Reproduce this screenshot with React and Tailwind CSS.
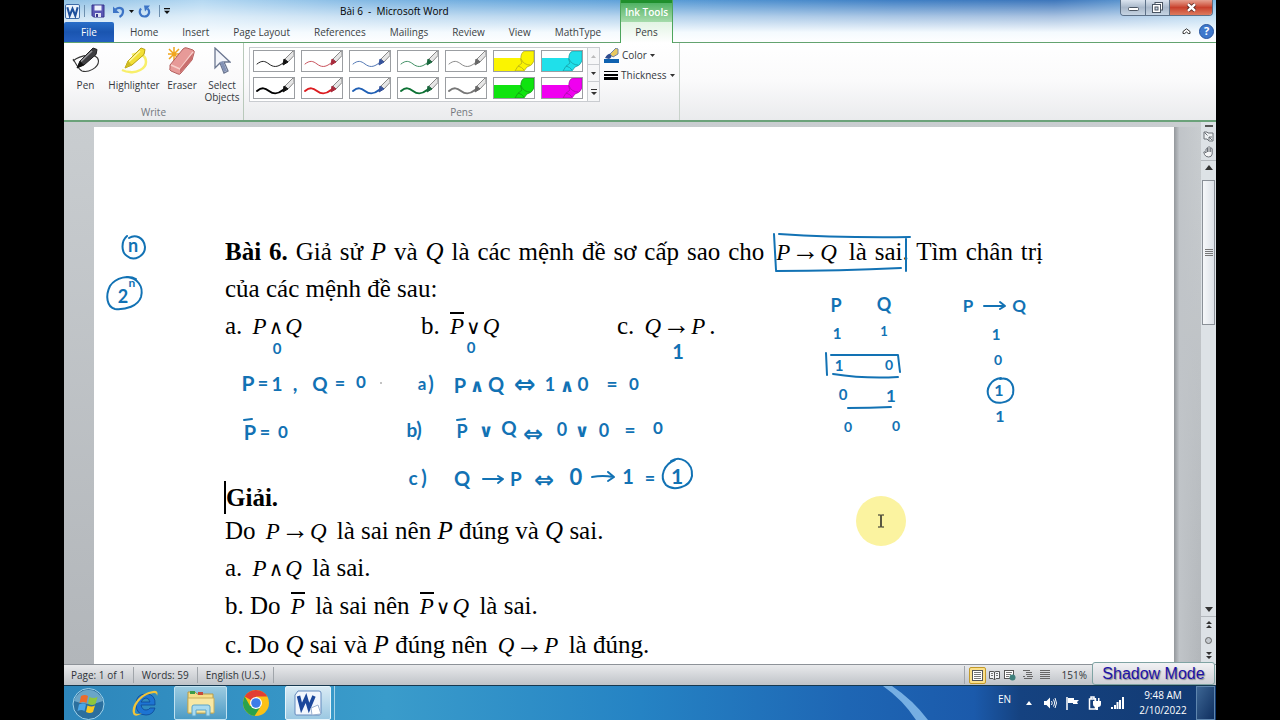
import React from "react";

const INK = "#1272b4";

function WordLogo({ size = 15 }) {
  return (
    <svg width={size} height={size} viewBox="0 0 16 16" aria-hidden="true">
      <rect x="0.5" y="0.5" width="15" height="15" rx="1.5" fill="#e9f1fb" stroke="#2f5f9f" />
      <path d="M2.5 3.5 L5 12.5 L8 5 L11 12.5 L13.5 3.5" fill="none" stroke="#1d4f9c" strokeWidth="2.2" />
    </svg>
  );
}

function QuickAccess() {
  return (
    <div className="flex items-center">
      <WordLogo size={15} />
      <span className="mx-1 h-3 w-px bg-[#6d8fae]" />
      <button aria-label="Save" className="ml-[2px]">
        <svg width="14" height="14" viewBox="0 0 14 14">
          <path d="M1 1h12v12H2.500L1 11.500z" fill="#5b57b5" stroke="#37358b" />
          <rect x="3.500" y="1.500" width="7" height="5" fill="#eef2fb" />
          <rect x="4" y="9" width="6" height="4" fill="#dfe3f2" />
          <rect x="5" y="10" width="2" height="3" fill="#37358b" />
        </svg>
      </button>
      <button aria-label="Undo" className="ml-2 flex items-center">
        <svg width="12" height="13" viewBox="0 0 12 13">
          <path d="M2.500 4.500 C6 1.500 10.500 3 10 7 C9.800 9.500 8.500 11 6.500 12" fill="none" stroke="#3d74c6" strokeWidth="2.200" />
          <path d="M0 1.500 V8 H6.500z" fill="#3d74c6" />
        </svg>
      </button>
      <svg className="ml-1" width="5" height="3" viewBox="0 0 5 3"><path d="M0 0h5L2.500 3z" fill="#111" /></svg>
      <button aria-label="Repeat" className="ml-1">
        <svg width="13" height="13" viewBox="0 0 13 13">
          <path d="M3 3.500 C0.500 6.500 2 11.500 6.500 11.500 C11 11.500 12.500 6.500 9.500 3.500" fill="none" stroke="#3d74c6" strokeWidth="2.200" />
          <path d="M6 0.500 H12 L7 6.500z" fill="#3d74c6" />
        </svg>
      </button>
      <span className="ml-2 h-3 w-px bg-[#6d8fae]" />
      <button aria-label="Customize Quick Access Toolbar" className="ml-1">
        <svg width="6" height="6" viewBox="0 0 6 6"><path d="M0 0h6v1.200H0zM0 2.800h6L3 6z" fill="#111" /></svg>
      </button>
    </div>
  );
}

const tabs = ["Home", "Insert", "Page Layout", "References", "Mailings", "Review", "View", "MathType"];

function Header() {
  return (
    <header className="flex h-[43px] shrink-0 bg-[linear-gradient(180deg,transparent_0%,rgba(255,255,255,0.55)_38%,#f4fafe_75%,#ffffff_100%),linear-gradient(90deg,#8fc0e4_0%,#b4d8f2_12%,#7db5e2_28%,#5c9fd8_50%,#3f7fc4_72%,#3d76bb_86%,#7fbbe8_100%)]">
      <div className="flex w-[556px] flex-col">
        <div className="flex h-[22px] items-center pl-[1px]">
          <QuickAccess />
          <h1 className="ml-[170px] text-[10px] leading-5 whitespace-pre text-black">Bài 6  -  Microsoft Word</h1>
        </div>
        <nav className="flex h-[21px] items-stretch border-b border-[#63a36f] text-[10px] text-[#3b3f44]">
          <button className="w-[50px] rounded-t-[2px] bg-linear-to-b from-[#2a6fc9] via-[#1a55b0] to-[#2560c0] text-white">File</button>
          <div className="flex gap-6 pl-4">
            {tabs.map((t) => (
              <button key={t}>{t}</button>
            ))}
          </div>
        </nav>
      </div>
      <div className="flex w-[53px] flex-col border-x border-[#4da55c] text-[10px]">
        <div className="flex h-[22px] items-center justify-center border-t-[3px] border-[#1f8f2c] bg-linear-to-b from-[#4fb263] to-[#a5dbab] font-semibold whitespace-nowrap text-white">Ink Tools</div>
        <button className="grow bg-linear-to-b from-[#e2f4e4] to-white text-[#3b3f44]">Pens</button>
      </div>
      <div className="flex grow flex-col items-end border-b border-[#63a36f]">
        <div className="mr-[3px] flex h-4 overflow-hidden rounded-b-[4px] border border-t-0 border-[#5d7188]">
          <button aria-label="Minimize" className="flex w-[25px] items-end justify-center border-r border-[#5d7188] bg-linear-to-b from-[#dbe4ef] via-[#a9b8ca] to-[#c6d4e3] pb-1">
            <svg width="11" height="4" viewBox="0 0 11 4"><rect x="0.500" y="0.500" width="10" height="3" rx="1" fill="#fff" stroke="#4a5563" /></svg>
          </button>
          <button aria-label="Restore" className="flex w-6 items-center justify-center border-r border-[#5d7188] bg-linear-to-b from-[#dbe4ef] via-[#a9b8ca] to-[#c6d4e3]">
            <svg width="11" height="11" viewBox="0 0 11 11"><rect x="3" y="0.500" width="7.500" height="7.500" fill="#fff" stroke="#4a5563" /><rect x="0.500" y="2.500" width="8" height="8" fill="#fff" stroke="#4a5563" /><rect x="3" y="5" width="3" height="3" fill="#cdd7e2" stroke="#4a5563" /></svg>
          </button>
          <button aria-label="Close" className="flex w-[42px] items-center justify-center bg-linear-to-b from-[#e5a191] via-[#c8402c] to-[#dd7a5e]">
            <svg width="11" height="9" viewBox="0 0 11 9"><path d="M2 1.200l7 6.600M9 1.200L2 7.800" stroke="#5b2a24" strokeWidth="4" /><path d="M2 1.200l7 6.600M9 1.200L2 7.800" stroke="#fff" strokeWidth="2.400" /></svg>
          </button>
        </div>
        <div className="mr-[2px] mt-2 flex items-center gap-2">
          <button aria-label="Minimize the Ribbon">
            <svg width="9" height="7" viewBox="0 0 9 7"><path d="M1 5.500V3.500L4.500 0.800 8 3.500v2H6.300L4.500 4 2.700 5.500z" fill="#fff" stroke="#333" /></svg>
          </button>
          <button aria-label="Help" className="flex size-[15px] items-center justify-center rounded-full border border-[#28559f] bg-[#3e78cc] text-[11px] font-bold text-white">?</button>
        </div>
      </div>
    </header>
  );
}

function PenIcon({ kind }) {
  if (kind === "eraser")
    return (
      <svg width="28" height="28" viewBox="0 0 28 28">
        <path d="M6 0v14M-1 7h14M1 2l10 10M11 2L1 12" stroke="#f0a51d" strokeWidth="1.500" />
        <path d="M2 18L15 2q2-2 4-1l6 2q2 1 1 3l-2 7-11 13q-1 2-3 1l-7-3q-2-1-1-3z" fill="#e79a98" stroke="#b4605f" />
        <path d="M3 18l9 4L25 5" fill="none" stroke="#f8cfcb" strokeWidth="1.500" />
        <path d="M12 22l13-16-1 7-12 13z" fill="#c96f6e" />
      </svg>
    );
  if (kind === "select")
    return (
      <svg width="18" height="28" viewBox="0 0 18 28">
        <path d="M2 1v20l5-5 4 10 4-2-4-9h6z" fill="#f3f5fa" stroke="#6b7690" strokeWidth="1.300" />
        <path d="M7 15l4 10 3-1-4-10z" fill="#8392b5" />
      </svg>
    );
  const pen = kind === "pen";
  const body = pen ? "#3f3f42" : "#f2df35";
  const edge = pen ? "#1d1d1f" : "#b7a012";
  return (
    <svg width="28" height="28" viewBox="0 0 28 28">
      <path
        d={pen ? "M1 14C8 8 26 5 26.500 14C26.500 21 16 26 10 24C6 22 5 18 1 12" : "M12 8C19 5 26 8 26 15C26 22 16 26 10 25C6 25 4 24 2 23"}
        fill="none"
        stroke={pen ? "#333" : "#f8ef6a"}
        strokeWidth={pen ? "1.100" : "2.500"}
      />
      <path d="M21 1l4 1.500-1 5L12 18l-7 3 3-7z" fill={body} stroke={edge} />
      <path d="M20 4L9 14.500" stroke={pen ? "#9a9a9e" : "#fff7a0"} strokeWidth="1.500" />
      <path d="M8 14l4 4-7 3z" fill={pen ? "#111" : "#d0bc22"} />
    </svg>
  );
}

const tools = [
  { kind: "pen", label: "Pen", w: "w-[43px]" },
  { kind: "highlighter", label: "Highlighter", w: "w-[52px]" },
  { kind: "eraser", label: "Eraser", w: "w-[42px]" },
  { kind: "select", label: "Select Objects", w: "w-[36px]" },
];

function PenSwatch({ color, width, tip }) {
  return (
    <svg width="40" height="20" viewBox="0 0 40 20" className="block">
      <path d="M3 13C8 9 11 10 15 13s8 4 14-1" fill="none" stroke={color} strokeWidth={width} strokeLinecap="round" />
      <path d="M31 8L39 0H40V4.500L34 11z" fill="#e6e6e6" stroke="#888" strokeWidth="1" />
      <path d="M29 14l1-6 4 3z" fill={tip} stroke={tip} strokeWidth="1" />
    </svg>
  );
}

function MarkerSwatch({ color, edge }) {
  return (
    <svg width="40" height="20" viewBox="0 0 40 20" className="block">
      <rect y="7" width="28" height="13" fill={color} />
      <path d="M27 5Q28 0 32 0H40V10Q38 15 33 16L30 20H21Q23 15 28 12Q26 9 27 5z" fill={color} stroke={edge} strokeWidth="1" strokeOpacity="0.700" />
      <path d="M27 8q3 6 9 6M24 15q4 1 6 4" fill="none" stroke={edge} strokeOpacity="0.700" />
      <path d="M33 20l2-3h5v3z" fill="#fff" />
    </svg>
  );
}

const swatches = [
  { name: "Thin black pen", color: "#222", tip: "#111", width: 1 },
  { name: "Thin red pen", color: "#c9525c", tip: "#a82a3c", width: 1 },
  { name: "Thin blue pen", color: "#5378b5", tip: "#35529a", width: 1 },
  { name: "Thin green pen", color: "#3f8f63", tip: "#17663b", width: 1 },
  { name: "Thin gray pen", color: "#8a8a8a", tip: "#666", width: 1 },
  { name: "Yellow highlighter", marker: true, color: "#fbf400", edge: "#a9a41c" },
  { name: "Cyan highlighter", marker: true, color: "#1fe0ea", edge: "#17959c" },
  { name: "Black pen", color: "#000", tip: "#111", width: 2 },
  { name: "Red pen", color: "#dc1c20", tip: "#a82a3c", width: 2 },
  { name: "Blue pen", color: "#1f5fb4", tip: "#35529a", width: 2 },
  { name: "Green pen", color: "#0d7234", tip: "#17663b", width: 2 },
  { name: "Gray pen", color: "#777", tip: "#666", width: 2 },
  { name: "Green highlighter", marker: true, color: "#10e410", edge: "#149214" },
  { name: "Magenta highlighter", marker: true, color: "#f000f0", edge: "#a010a0" },
];

function Ribbon() {
  return (
    <section className="flex h-[79px] shrink-0 border-b-2 border-[#6ba27a] bg-linear-to-b from-white via-[#fafafb] to-[#eaebed] text-[10px] text-[#33373c]">
      <div className="flex w-[180px] flex-col border-r border-[#b9c9bb]">
        <div className="flex h-[62px] gap-[1px] pt-1">
          {tools.map((t) => (
            <button key={t.kind} className={`flex flex-col items-center ${t.w}`}>
              <span className="flex h-[32px] items-start"><PenIcon kind={t.kind} /></span>
              <span className="text-center leading-[12px]">{t.label}</span>
            </button>
          ))}
        </div>
        <div className="text-center leading-4 text-[#72777d]">Write</div>
      </div>
      <div className="flex w-[436px] flex-col border-r border-[#c9d3cb]">
        <div className="flex h-[62px] pt-1 pl-[5px]">
          <div className="flex h-[55px] border border-[#c9ccd0] bg-white">
            <div className="grid grid-cols-7 gap-x-[6px] gap-y-[5px] py-[2px] pr-1 pl-[3px]">
              {swatches.map((s) => (
                <button key={s.name} aria-label={s.name} className="h-[22px] w-[42px] overflow-hidden border border-[#9b9ea2] bg-white">
                  {s.marker ? <MarkerSwatch {...s} /> : <PenSwatch {...s} />}
                </button>
              ))}
            </div>
            <div className="flex w-3 flex-col divide-y divide-[#c9ccd0] border-l border-[#c9ccd0] bg-[#f6f7f8]">
              <button aria-label="Scroll up" className="flex grow items-center justify-center"><svg width="5" height="3" viewBox="0 0 5 3"><path d="M0 3h5L2.500 0z" fill="#bbb" /></svg></button>
              <button aria-label="Scroll down" className="flex grow items-center justify-center"><svg width="5" height="3" viewBox="0 0 5 3"><path d="M0 0h5L2.500 3z" fill="#333" /></svg></button>
              <button aria-label="More pens" className="flex grow items-center justify-center"><svg width="6" height="6" viewBox="0 0 6 6"><path d="M0 0h6v1H0zM0 3h6L3 6z" fill="#333" /></svg></button>
            </div>
          </div>
          <div className="flex flex-col items-start gap-1 pl-1">
            <button className="flex h-4 items-center gap-[3px]">
              <svg width="15" height="15" viewBox="0 0 15 15"><path d="M1 10q3-5 6-4 2 3-2 5z" fill="#2f4d8f" /><path d="M6 6l6-6 2 1 0 5-5 3z" fill="#e8c860" stroke="#7182a8" /><rect y="11" width="15" height="4" fill="#0f62b0" /></svg>
              Color
              <svg width="5" height="3" viewBox="0 0 5 3"><path d="M0 0h5L2.500 3z" fill="#333" /></svg>
            </button>
            <button className="flex h-4 items-center gap-[3px]">
              <svg width="14" height="9" viewBox="0 0 14 9"><path d="M0 0h14v1H0zM0 3h14v2H0zM0 6h14v3H0z" fill="#000" /></svg>
              Thickness
              <svg width="5" height="3" viewBox="0 0 5 3"><path d="M0 0h5L2.500 3z" fill="#333" /></svg>
            </button>
          </div>
        </div>
        <div className="text-center leading-4 text-[#72777d]">Pens</div>
      </div>
    </section>
  );
}

function V({ bar, children }) {
  return <i className={bar ? "border-t-2 border-black leading-none" : ""}>{children}</i>;
}

const ops = { and: "∧", or: "∨", to: "→" };

function M({ a, op, b, bar }) {
  return (
    <span className="mx-1 inline-block text-[23px] leading-none whitespace-nowrap">
      <V bar={bar}>{a}</V>
      {op && (
        <span className={op === "to" ? "px-[1px] font-['Liberation_Serif',serif] text-[28px] leading-none" : "mx-[2px] font-['DejaVu_Sans',sans-serif] text-[20px] leading-none"}>
          {ops[op]}
        </span>
      )}
      {b && <V>{b}</V>}
    </span>
  );
}

/* [text, centre x, baseline y, size] */
const inkText = [
  ["n", 133, 252, 18], ["2", 123, 303, 18], ["n", 132, 287, 12],
  ["0", 277, 354, 15], ["0", 471, 353, 15], ["1", 678, 359, 20],
  ["P", 248, 391, 21], ["=", 263, 390, 18], ["1", 277, 391, 19], [",", 295, 391, 20], ["Q", 320, 391, 19], ["=", 340, 390, 18], ["0", 361, 388, 17],
  ["P", 250, 440, 20], ["=", 265, 439, 18], ["0", 283, 438, 17],
  ["a", 422, 390, 17], [")", 431, 391, 20],
  ["P", 460, 393, 20], ["∧", 477, 392, 18], ["Q", 496, 392, 20], ["⇔", 525, 393, 26], ["1", 550, 391, 18], ["∧", 567, 392, 18], ["0", 583, 391, 19], ["=", 612, 391, 19], ["0", 634, 390, 17],
  ["b", 412, 437, 19], [")", 419, 437, 20],
  ["P", 462, 438, 18], ["∨", 486, 437, 18], ["Q", 509, 435, 19], ["⇔", 533, 442, 24], ["0", 562, 436, 18], ["∨", 582, 437, 18], ["0", 604, 437, 18], ["=", 630, 437, 19], ["0", 658, 434, 17],
  ["c", 413, 485, 19], [")", 424, 485, 20],
  ["Q", 462, 486, 20], ["P", 516, 486, 19], ["⇔", 544, 488, 24], ["0", 576, 485, 22], ["1", 628, 484, 20], ["=", 650, 485, 18], ["1", 677, 484, 21],
  ["P", 836, 312, 18], ["Q", 884, 311, 18], ["P", 968, 312, 17], ["Q", 1019, 312, 17],
  ["1", 837, 339, 15], ["1", 884, 336, 13], ["1", 996, 340, 15],
  ["1", 839, 371, 15], ["0", 889, 370, 14], ["0", 998, 365, 14],
  ["0", 843, 400, 15], ["1", 891, 402, 17], ["1", 999, 396, 16],
  ["0", 848, 432, 14], ["0", 896, 431, 14], ["1", 1000, 422, 16],
];

function Ink() {
  return (
    <svg className="pointer-events-none absolute top-0 left-0" width="1080" height="537" viewBox="94 127 1080 537">
      <circle cx="881" cy="521" r="25" fill="#fbf3a0" />
      <path d="M878 515h2.500q.5 0 .5 1v10q0 1-.5 1H878M884 515h-2.500q-.5 0-.5 1v10q0 1 .5 1H884" fill="none" stroke="#222" />
      <g fill={INK} textAnchor="middle" fontFamily="Lato, 'DejaVu Sans', sans-serif" fontWeight="700">
        {inkText.map(([t, x, y, s], i) => (
          <text key={i} x={x} y={y} fontSize={s}>{t}</text>
        ))}
      </g>
      <g fill="none" stroke={INK} strokeWidth="2" strokeLinecap="round" strokeLinejoin="round">
        <path d="M127 236C121 241 121 252 127 256C134 262 145 256 145 247C144 237 135 234 129 238" />
        <path d="M136 279C129 275 116 277 110 286C105 296 107 307 115 309C126 310 138 306 141 297C144 286 137 278 127 277" />
        <path d="M244 420L252 419M457 420L465 419" />
        <path d="M774 234L776 270M779 234Q840 238 910 237M906 238V271M776 271Q840 271 901 268" />
        <path d="M826 353L827 375M831 355H898Q899 364 900 372M833 374Q865 379 898 377" />
        <path d="M848 408Q870 408 891 407" />
        <path d="M1001 378C991 379 985 389 989 397C994 406 1010 404 1013 394C1015 383 1008 377 1000 379" />
        <path d="M675 460C664 464 659 477 666 485C673 491 690 488 692 476C693 462 680 455 671 461" />
        <path d="M483 479Q492 479 502 479M498 476L503 479L498 483" />
        <path d="M592 477Q603 475 613 477M608 472L614 477L608 481" />
        <path d="M984 306H1004M1000 302L1005 306L1000 309" />
      </g>
      <circle cx="381" cy="383" r="0.800" fill="#777" />
    </svg>
  );
}

function DocumentPage() {
  return (
    <main className="relative mt-[5px] ml-[30px] flex-1 overflow-hidden bg-white pt-[106px] pr-[131px] pl-[131px] font-['Liberation_Serif',serif] text-[25px] leading-[37px] text-black">
      <p className="[text-align-last:justify]">
        <b>Bài 6.</b> Giả sử <i>P</i> và <i>Q</i> là các mệnh đề sơ cấp sao cho{" "}
        <M a="P" op="to" b="Q" /> là sai. Tìm chân trị
      </p>
      <p>của các mệnh đề sau:</p>
      <div className="grid grid-cols-[196px_196px_1fr]">
        <p>a. <M a="P" op="and" b="Q" /></p>
        <p>b. <M a="P" op="or" b="Q" bar /></p>
        <p>c. <M a="Q" op="to" b="P" />.</p>
      </div>
      <div className="mt-[137px] leading-[33px]">
        <h2 className="-ml-px border-l-2 border-black leading-[33px] font-bold">Giải.</h2>
        <p>Do <M a="P" op="to" b="Q" /> là sai nên <i>P</i> đúng và <i>Q</i> sai.</p>
      </div>
      <div className="mt-[2px]">
        <p>a. <M a="P" op="and" b="Q" /> là sai.</p>
        <p className="leading-[40px]">b. Do <M a="P" bar /> là sai nên <M a="P" op="or" b="Q" bar /> là sai.</p>
        <p>c. Do <i>Q</i> sai và <i>P</i> đúng nên <M a="Q" op="to" b="P" /> là đúng.</p>
      </div>
      <Ink />
    </main>
  );
}

function ScrollBar() {
  return (
    <aside className="flex w-[15px] shrink-0 flex-col items-center bg-[#dde2e6]">
      <span className="mt-[3px] h-[2px] w-2 shrink-0 bg-[#555]" />
      <svg className="mt-1 shrink-0" width="11" height="11" viewBox="0 0 11 11"><path d="M1 1h3l1 1h5v8H6L4 8H1z" fill="#eef1f3" stroke="#6b7077" /><path d="M1.500 1.500l3 3M6 6l3 3M9 6H6v3" fill="none" stroke="#6b7077" /></svg>
      <svg className="mt-1 shrink-0" width="12" height="12" viewBox="0 0 12 12"><path d="M3 7V3q1-1 1.500 0V1.500q1-1 1.500 0 1-1.500 1.600 0V2.500q1.200-1 1.600.5V8q-.5 3-3.500 3T1.500 8.500L.8 6q1-1 2.200 1zM4.500 3v3M6 2v4M7.700 2.500V6" fill="#f4f5f6" stroke="#6b7077" /></svg>
      <span className="mt-[2px] h-px w-full shrink-0 bg-[#b3b8bd]" />
      <button aria-label="Scroll up" className="my-1"><svg width="8" height="5" viewBox="0 0 8 5" className="block"><path d="M0 5h8L4 0z" fill="#333" /></svg></button>
      <div className="mt-[6px] flex h-[145px] w-[13px] shrink-0 flex-col items-center justify-center gap-[1px] border border-[#8a9097] bg-linear-to-r from-[#f6f8fa] to-[#dde2e8]">
        <span className="h-px w-2 bg-[#777]" />
        <span className="h-px w-2 bg-[#777]" />
        <span className="h-px w-2 bg-[#777]" />
        <span className="h-px w-2 bg-[#777]" />
      </div>
      <div className="flex-1" />
      <button aria-label="Scroll down" className="mb-1"><svg width="8" height="5" viewBox="0 0 8 5" className="block"><path d="M0 0h8L4 5z" fill="#333" /></svg></button>
      <span className="h-px w-full bg-[#b3b8bd]" />
      <button aria-label="Previous page" className="mt-1"><svg width="6" height="8" viewBox="0 0 6 8" className="block"><path d="M0 3h6L3 0zM0 7h6L3 4z" fill="#333" /></svg></button>
      <button aria-label="Select browse object" className="mt-2 size-[7px] rounded-full border border-[#666] bg-[#c4c9ce]" />
      <button aria-label="Next page" className="mt-2 mb-1"><svg width="6" height="8" viewBox="0 0 6 8" className="block"><path d="M0 0h6L3 3zM0 4h6L3 7z" fill="#333" /></svg></button>
    </aside>
  );
}

function StatusBar() {
  return (
    <footer className="relative flex h-[21px] shrink-0 items-center border-t border-[#8d9298] bg-linear-to-b from-[#e9eaec] to-[#bfc3c8] text-[10px] whitespace-nowrap text-[#2f3338]">
      <span className="pl-[7px]">Page: 1 of 1</span>
      <span className="mx-2 h-4 w-px bg-[#a0a5aa]" />
      <span>Words: 59</span>
      <span className="mx-2 h-4 w-px bg-[#a0a5aa]" />
      <span>English (U.S.)</span>
      <span className="mx-2 h-4 w-px bg-[#a0a5aa]" />
      <div className="ml-auto flex items-center pr-[129px]">
        <span className="mr-1 h-[18px] w-px bg-[#a0a5aa]" />
        <button aria-label="Print Layout" className="flex size-[17px] items-center justify-center rounded-[2px] border border-[#c39a2b] bg-[#fbe08a]">
          <svg width="11" height="11" viewBox="0 0 11 11"><rect x="0.500" y="0.500" width="10" height="10" fill="#fff" stroke="#555" /><path d="M2 2.500h7M2 4.500h7M2 6.500h7M2 8.500h7" stroke="#777" /></svg>
        </button>
        <button aria-label="Full Screen Reading" className="ml-[3px]"><svg width="11" height="11" viewBox="0 0 11 11"><path d="M5.500 2L4 1.500H.5v7H4l1.500 1.500L7 8.500h3.500v-7H7zM5.500 2v8" fill="#f3f4f6" stroke="#555" /><path d="M2 3.500h2M2 5.500h2M7 3.500h2M7 5.500h2" stroke="#777" /></svg></button>
        <button aria-label="Web Layout" className="ml-1"><svg width="12" height="11" viewBox="0 0 12 11"><rect x="0.500" y="0.500" width="9" height="8" fill="#fff" stroke="#555" /><path d="M2 2.500h6M2 4.500h5M2 6.500h3" stroke="#777" /><circle cx="8.500" cy="7.500" r="3" fill="#3e7f7b" /></svg></button>
        <button aria-label="Outline" className="ml-[7px]"><svg width="10" height="10" viewBox="0 0 10 10"><path d="M0 .5h7M3 2.500h6M3 4.500h6M0 6.500h2M4 6.500h6M1 8.500h8" fill="none" stroke="#666" /></svg></button>
        <button aria-label="Draft" className="ml-[7px]"><svg width="10" height="10" viewBox="0 0 10 10"><path d="M0 .5h10M0 2.500h10M0 4.500h10M0 6.500h10M0 8.500h10" fill="none" stroke="#666" /></svg></button>
        <span className="ml-3">151%</span>
      </div>
      <div className="absolute right-[1px] bottom-0 flex h-[23px] w-[123px] items-center justify-center rounded-[3px] border border-[#7fa3a3] bg-linear-to-b from-[#f2f2f4] to-[#cfd0d6] font-['Liberation_Sans',sans-serif] text-[16px] text-[#1d12a8] [text-shadow:1px_1px_1px_#888]">
        Shadow Mode
      </div>
    </footer>
  );
}

function Taskbar() {
  return (
    <footer className="flex h-[35px] shrink-0 items-center border-t border-[#16384f] bg-[linear-gradient(90deg,#2d86bb_0%,#3a9ccb_28%,#2583c4_50%,#1e66b4_68%,#1b5aab_79%,#154280_83%,#123a72_100%)] text-white">
      <button aria-label="Start" className="ml-2">
        <svg width="33" height="33" viewBox="0 0 33 33" className="block">
          <circle cx="16.500" cy="17" r="15.500" fill="#2b6f9e" stroke="#9dd2ea" />
          <path d="M2 14a15 15 0 0 1 29 0q-14 6-29 0z" fill="#86bcd8" opacity="0.700" />
          <path d="M9 9q4-2 7 0l-1.500 7q-3-2-7 0z" fill="#ee6b2c" />
          <path d="M17.500 10q4 2 8 0l-2 7q-3 2-7.500 0z" fill="#8fc73e" />
          <path d="M7 17.500q4-2 7 0L12.500 24q-3-2-7 0z" fill="#4aa6e8" />
          <path d="M15.500 18.500q4 2 7.500 0l-2 6.500q-3 2-7 0z" fill="#fbc91f" />
        </svg>
      </button>
      <button aria-label="Internet Explorer" className="ml-[25px]">
        <svg width="30" height="28" viewBox="0 0 30 28" className="block">
          <path d="M25 16H11q1 5 5 5 3 0 4-2h5q-2 7-9 7-10 0-10-11 0-10 10-10t9 11zm-5-3q-1-4-4-4t-5 4z" fill="#1d74d2" stroke="#0d4896" strokeWidth="0.800" />
          <path d="M4 26C-1 20 8 4 23 2q6-1 4 5 0-3-3-3C13 5 4 15 5 24q2 2 7 0-5 4-8 2z" fill="#f2c438" />
        </svg>
      </button>
      <button aria-label="File Explorer" className="ml-[14px] flex h-[34px] w-[53px] items-center justify-center rounded-[2px] border border-[#bfe2f2] bg-linear-to-b from-[#9bcbe0] to-[#4b9bc5]">
        <svg width="30" height="28" viewBox="0 0 30 28">
          <path d="M2 3h7l2 2h16v19H2z" fill="#f5df8b" stroke="#b79b46" />
          <path d="M4 2h5v3H4z" fill="#3c9c49" /><path d="M12 3h5v3h-5z" fill="#c64b3a" />
          <path d="M2 9h26v15H2z" fill="#f8e8a4" stroke="#c7ad5b" />
          <path d="M6 27v-9q0-2 2-2h14q2 0 2 2v9h-4v-6H10v6z" fill="#a9dbf0" stroke="#5ba4c9" />
        </svg>
      </button>
      <button aria-label="Google Chrome" className="ml-[15px]">
        <svg width="28" height="28" viewBox="0 0 28 28" className="block">
          <circle cx="14" cy="14" r="13" fill="#fbc116" />
          <path d="M14 14L2.700 7.500A13 13 0 0 1 25.300 7.500H14z" fill="#e23f33" />
          <path d="M2.700 7.500A13 13 0 0 0 12.500 26.900L19 17 8 17z" fill="#2ba24c" />
          <circle cx="14" cy="14" r="6" fill="#fff" /><circle cx="14" cy="14" r="4.800" fill="#3d7de8" />
        </svg>
      </button>
      <button aria-label="Microsoft Word" className="ml-[15px] flex h-[34px] w-[46px] items-center justify-center rounded-[2px] border border-[#e5f4fb] bg-linear-to-b from-[#d8eaf4] to-[#9bc8e2]">
        <svg width="28" height="27" viewBox="0 0 28 27">
          <path d="M4 1h21q2 0 2 2v20q0 2-2 2H2q-1 0-1-2V5z" fill="#f1f6fd" stroke="#6389bd" />
          <path d="M4.500 6l3 12L12 8l3 10 5-12" fill="none" stroke="#1b479b" strokeWidth="3.500" />
          <path d="M17 18l7-3 3 9-9 1z" fill="#fff" stroke="#9ab0cf" />
        </svg>
      </button>
      <span className="ml-[1px] h-[34px] w-[3px] border-r border-[#a5d3e8]" />
      <svg className="ml-auto h-[34px] w-[60px]" viewBox="0 0 60 34" aria-hidden="true"><path d="M4 0h9Q34 14 49 34H37Q24 14 4 0z" fill="#8dc3f0" opacity="0.800" /></svg>
      <div className="ml-[59px] flex items-center">
        <span className="-mt-2 text-[10px]">EN</span>
        <svg className="ml-[15px]" width="6" height="4" viewBox="0 0 6 4"><path d="M0 4h6L3 0z" fill="#fff" /></svg>
        <svg className="ml-3" width="13" height="12" viewBox="0 0 13 12"><path d="M0 4h2.500L6 .5v11L2.500 8H0z" fill="#fff" /><path d="M7.500 4q1.500 2 0 4M9.500 2.500q2.500 3.500 0 7M11 1q3 5 0 10" fill="none" stroke="#fff" /></svg>
        <svg className="ml-[9px]" width="13" height="13" viewBox="0 0 13 13"><path d="M1 0v13" stroke="#fff" strokeWidth="1.500" /><path d="M2 1h6v2h5l-2 2 1 2H7V6H2z" fill="#fff" /></svg>
        <svg className="ml-[9px]" width="13" height="14" viewBox="0 0 13 14"><path d="M1.500 3h6v10h-6zM3 1h3v2H3z" fill="none" stroke="#fff" strokeWidth="1.500" /><path d="M5 5h8v3q0 3-3 3v3H8v-3q-3 0-3-3zM6.500 2H8v3H6.500zM10 2h1.500v3H10z" fill="#fff" /></svg>
        <svg className="ml-[10px]" width="13" height="12" viewBox="0 0 13 12"><path d="M0 10h2v2H0zM3 8h2v4H3zM5.500 5h2v7h-2zM8 3h2v9H8zM11 0h2v12h-2z" fill="#fff" /></svg>
        <div className="ml-[14px] w-[50px] text-center text-[10px] leading-[15px] whitespace-nowrap">
          <div>9:48 AM</div>
          <div>2/10/2022</div>
        </div>
        <button aria-label="Show desktop" className="mr-[1px] ml-2 h-[34px] w-[19px] border border-[#5f86ae] bg-linear-to-br from-[#3d6694] to-[#0f2f5f]" />
      </div>
    </footer>
  );
}

export default function App() {
  return (
    <div className="h-screen overflow-hidden bg-black px-16 font-['Open_Sans','Noto_Sans',sans-serif]">
      <div className="flex h-full flex-col">
        <Header />
        <Ribbon />
        <div className="flex min-h-0 flex-1 bg-linear-to-b from-[#c9cdd0] to-[#b2b6ba]">
          <DocumentPage />
          <div className="mt-[5px] w-[27px] shrink-0 bg-linear-to-r from-[#94989c] via-[#c0c4c8] via-20% to-transparent" />
          <ScrollBar />
        </div>
        <StatusBar />
        <Taskbar />
      </div>
    </div>
  );
}
